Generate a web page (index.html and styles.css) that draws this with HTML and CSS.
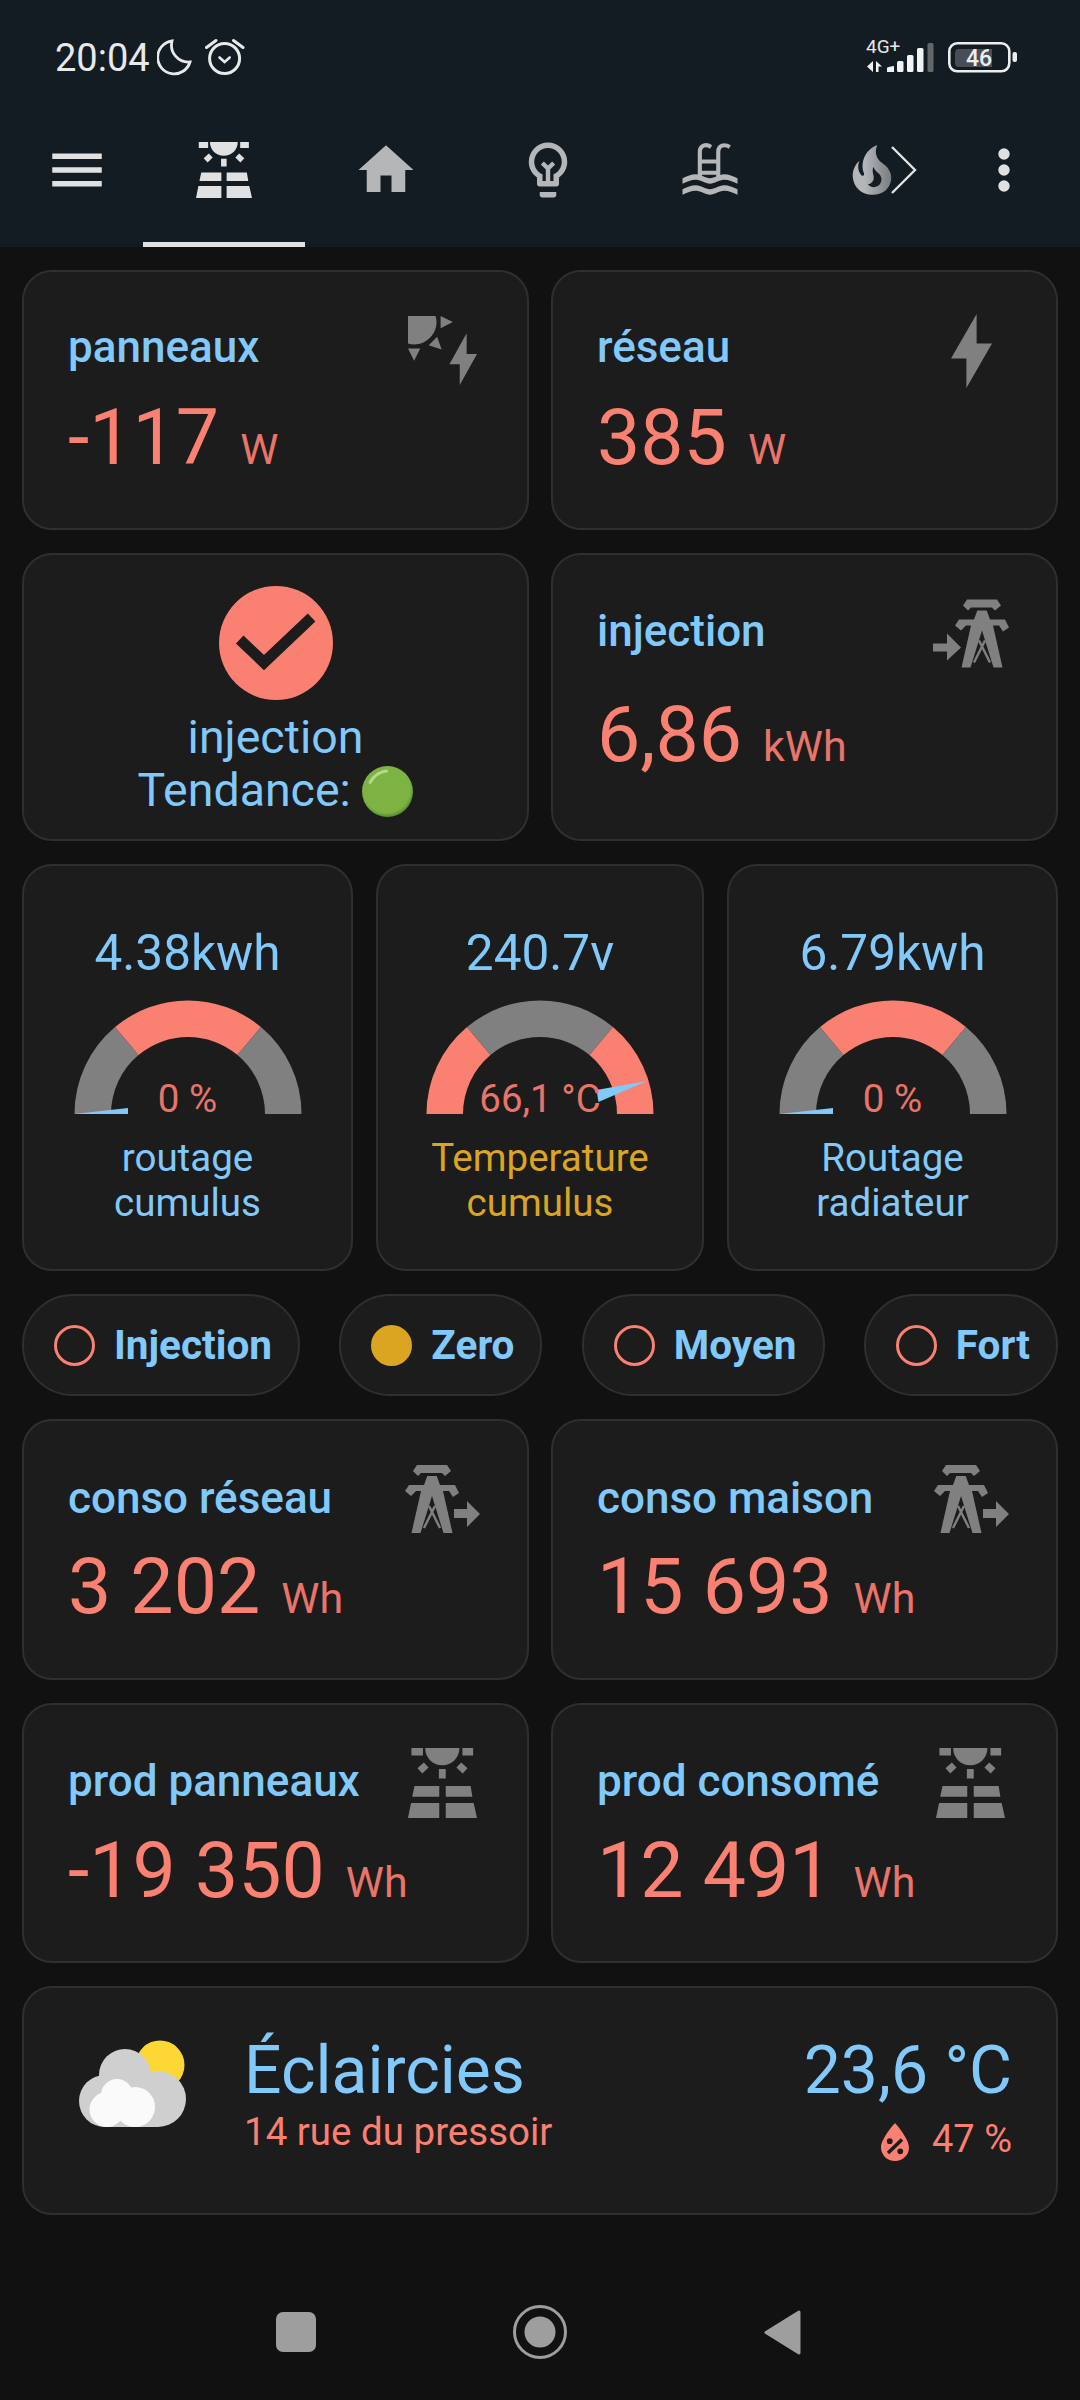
FILE: index.html
```html
<!DOCTYPE html>
<html lang="fr">
<head>
<meta charset="utf-8">
<title>Dashboard</title>
<link rel="stylesheet" href="styles.css">
</head>
<body>
<header class="top">
  <div class="status">
    <span class="time">20:04</span>
    <svg class="moon" viewBox="0 0 35 37"><path d="M15,2 A16.5,16.5 0 1 0 33,23 A17,17 0 0 1 15,2 Z"/></svg>
    <svg class="alarm" viewBox="0 0 40 37"><circle cx="19.6" cy="20.5" r="15"/><path d="M1.5,9.5 L11,2.5 M28.5,2.5 L38,9.5"/><path class="thin" d="M14.5,19.5 L19.6,24 L24.7,19.5"/></svg>
    <span class="spacer"></span>
    <svg class="net" viewBox="0 -6 68 39">
      <text class="net-text" x="0" y="13">4G+</text>
      <path class="net-arrow" d="M1,26.500 L7,21 V32 Z M10,21 L16,26.500 H12.500 V32 H10 Z"/>
      <path class="net-bar" d="M21,32V28Q21,27 28,26V32Z"/>
      <rect class="net-bar" x="31" y="21" width="6.5" height="11" rx="1.5"/>
      <rect class="net-bar" x="41" y="15" width="6.5" height="17" rx="1.5"/>
      <rect class="net-bar" x="51" y="8" width="6.5" height="24" rx="1.5"/>
      <rect class="net-dim" x="61.5" y="3" width="6" height="29" rx="1.5"/>
    </svg>
    <svg class="battery" viewBox="0 0 70 31">
      <rect class="bat-shell" x="1.3" y="1.3" width="60" height="28" rx="8"/>
      <path class="bat-fill" d="M11,7H44V25H11Q7,25 7,21V11Q7,7 11,7Z"/>
      <rect class="bat-tip" x="64.5" y="10" width="4.5" height="10" rx="2"/>
      <text class="bat-text" x="31" y="24" text-anchor="middle">46</text>
    </svg>
  </div>
  <nav class="tabs">
    <div class="tab-menu"><svg class="ic66 on" viewBox="0 0 24 24"><path d="M3,6H21V8H3V6M3,11H21V13H3V11M3,16H21V18H3V16Z"/></svg></div>
    <div class="tab active"><svg class="ic-solar-nav on" viewBox="0 0 55.400 55.700" preserveAspectRatio="none"><path d="M2.750,0H12V6H2.750ZM43.700,0H52.300V6H43.700ZM13.800,0H41.300C41.300,8 35,13.700 27.500,13.700C20,13.700 13.800,8 13.800,0ZM12.700,11.500L16.500,15.500L11.500,20.300L7.600,16.200ZM42.700,11.500L47.800,16.200L43.900,20.300L38.900,15.500ZM24.800,16.700H30.300V24.300H24.800ZM5.200,30.300H25.100V38.700H3.400ZM30.300,30.300H50.300L51.700,38.700H30.300ZM2.400,43.700H25.100V55.700H0ZM30.300,43.700H52.700L55.400,55.700H30.300Z"/></svg></div>
    <div class="tab"><svg class="ic66 off" viewBox="0 0 24 24"><path d="M10,20V14H14V20H19V12H22L12,3L2,12H5V20H10Z"/></svg></div>
    <div class="tab"><svg class="ic66 off" viewBox="0 0 24 24"><path d="M12,2A7,7 0 0,1 19,9C19,11.38 17.81,13.47 16,14.74V17A1,1 0 0,1 15,18H9A1,1 0 0,1 8,17V14.74C6.19,13.47 5,11.38 5,9A7,7 0 0,1 12,2M9,21V20H15V21A1,1 0 0,1 14,22H10A1,1 0 0,1 9,21M12,4A5,5 0 0,0 7,9C7,11.05 8.23,12.81 10,13.58V16H14V13.58C15.77,12.81 17,11.05 17,9A5,5 0 0,0 12,4Z"/><path d="M11.2,16V11.8L9.4,10L10.5,8.9L12,10.4L13.5,8.9L14.6,10L12.8,11.8V16Z"/></svg></div>
    <div class="tab"><svg class="ic66 off" viewBox="0 0 24 24"><path d="M2,15C3.67,14.25 5.33,13.5 7,13.56C8.67,13.62 10.33,15 12,15C13.67,15 15.33,13.62 17,13.56C18.67,13.5 20.33,14.25 22,15V17C20.33,16.25 18.67,15.5 17,15.56C15.33,15.62 13.67,17 12,17C10.33,17 8.67,15.62 7,15.56C5.33,15.5 3.67,16.25 2,17V15M2,19C3.67,18.25 5.33,17.5 7,17.56C8.67,17.62 10.33,19 12,19C13.67,19 15.33,17.62 17,17.56C18.67,17.5 20.33,18.25 22,19V21C20.33,20.25 18.67,19.5 17,19.56C15.33,19.62 13.67,21 12,21C10.33,21 8.67,19.62 7,19.56C5.33,19.5 3.67,20.25 2,21V19Z"/><path class="pool-rail" d="M8.300,14.500V5.300C8.300,3 10.500,2.400 12.400,3.600M15,14.500V5.300C15,3 17.200,2.400 19.200,3.600M8.300,8.900H15M8.300,13H15"/></svg></div>
    <div class="tab">
      <svg class="ic66" viewBox="0 0 24 24"><defs><linearGradient id="flame" x1="0" x2="1" y1="0" y2="0"><stop offset="0.3" stop-color="#b4b6b8"/><stop offset="1" stop-color="#797d80"/></linearGradient></defs><path fill="url(#flame)" d="M17.66 11.2C17.43 10.9 17.15 10.64 16.89 10.38C16.22 9.78 15.46 9.35 14.82 8.72C13.33 7.26 13 4.85 13.95 3C13 3.23 12.17 3.75 11.46 4.32C8.87 6.4 7.85 10.07 9.07 13.22C9.11 13.32 9.15 13.42 9.15 13.55C9.15 13.77 9 13.97 8.8 14.05C8.57 14.15 8.33 14.09 8.14 13.93C8.08 13.88 8.04 13.83 8 13.76C6.87 12.33 6.69 10.28 7.45 8.64C5.78 10 4.87 12.3 5 14.47C5.06 14.97 5.12 15.47 5.29 15.97C5.43 16.57 5.7 17.17 6 17.7C7.08 19.43 8.95 20.67 10.96 20.92C13.1 21.19 15.39 20.8 17.03 19.32C18.86 17.66 19.5 15 18.56 12.72L18.43 12.46C18.22 12 17.66 11.2 17.66 11.2M14.5 17.5C14.22 17.74 13.76 18 13.4 18.1C12.28 18.5 11.16 17.94 10.5 17.28C11.69 17 12.4 16.12 12.61 15.23C12.78 14.43 12.46 13.77 12.33 13C12.21 12.26 12.23 11.63 12.5 10.94C12.69 11.32 12.89 11.7 13.13 12C13.9 13 15.11 13.44 15.37 14.8C15.41 14.94 15.43 15.08 15.43 15.23C15.46 16.05 15.1 16.95 14.5 17.5H14.5Z"/></svg>
      <svg class="chevron" viewBox="0 0 26 48"><path d="M1,1 L24,24 L1,47"/></svg>
    </div>
    <div class="tab-more"><svg class="dots on" viewBox="0 0 12 44"><circle cx="6" cy="6" r="5.7"/><circle cx="6" cy="22" r="5.7"/><circle cx="6" cy="38" r="5.7"/></svg></div>
  </nav>
</header>

<main class="dash">
  <section class="pair">
    <article class="card card-r1">
      <div class="stat">
        <div class="label">panneaux</div>
        <div class="value">-117 <span class="unit">W</span></div>
      </div>
      <svg class="icon icon-sun" viewBox="2 2 20 20"><path d="M11.45,2V5.55L15,3.77L11.45,2M10.45,8L8,10.46L11.75,11.71L10.45,8M2,11.45L3.77,15L5.55,11.45H2M10,2H2V10C2.57,10.17 3.17,10.25 3.77,10.25C7.35,10.26 10.26,7.35 10.27,3.75C10.26,3.16 10.17,2.57 10,2M17,22V16H14L19,7V13H22L17,22Z"/></svg>
    </article>
    <article class="card card-r1">
      <div class="stat">
        <div class="label">réseau</div>
        <div class="value">385 <span class="unit">W</span></div>
      </div>
      <svg class="icon icon-bolt" viewBox="14 7 8 15" preserveAspectRatio="none"><path d="M17,22V16H14L19,7V13H22L17,22Z"/></svg>
    </article>
  </section>

  <section class="pair">
    <article class="card card-trend">
      <svg class="check" viewBox="0 0 114 114"><circle cx="57" cy="57" r="57"/><path d="M20.700,53.600 L45,76.600 L92.600,31.400"/></svg>
      <div class="trend-text">injection<br>Tendance: <svg class="green" viewBox="0 0 50 50"><defs><radialGradient id="gr" cx="0.48" cy="0.45" r="0.55"><stop offset="0.85" stop-color="#7cb342"/><stop offset="1" stop-color="#558b2f"/></radialGradient></defs><circle cx="25" cy="25" r="25" fill="url(#gr)"/><path d="M8,16 Q14,6 24,5" class="shine"/></svg></div>
    </article>
    <article class="card card-r2">
      <div class="stat">
        <div class="label">injection</div>
        <div class="value">6,86 <span class="unit">kWh</span></div>
      </div>
      <svg class="icon icon-import" viewBox="33 19 76 68">
        <path d="M33,63H47V53L61,67L47,80V71H33Z"/>
        <path d="M63,25 67,19H97L101,25 95,30 92,27H71L68,30Z"/>
        <path d="M77.300,30H86.700L90,39H105L109,47 103,51 99,45H93L102.500,87H93.500L82,50 70.500,87H61.500L71,45H66L61,50 55,45 59,39H74Z"/>
        <path class="lattice" d="M79,60 L90,82 M85,60 L74,82"/>
      </svg>
    </article>
  </section>

  <section class="trio">
    <article class="card gauge-card">
      <div class="gauge-top">4.38kwh</div>
      <div class="gauge-wrap">
        <svg class="gauge" viewBox="-114 -114 228 114">
          <path class="g-grey" d="M-113.500,0 A113.500,113.500 0 0 1 -72.960,-86.950 L-49.500,-59 A77,77 0 0 0 -77,0 Z"/>
          <path class="g-red" d="M-72.960,-86.950 A113.500,113.500 0 0 1 72.960,-86.950 L49.500,-59 A77,77 0 0 0 -49.500,-59 Z"/>
          <path class="g-grey" d="M72.960,-86.950 A113.500,113.500 0 0 1 113.500,0 L77,0 A77,77 0 0 0 49.500,-59 Z"/>
          <polygon class="g-needle" points="-113.500,0 -60,-6 -60,0"/>
        </svg>
        <span class="g-text">0 %</span>
      </div>
      <div class="gauge-name">routage<br>cumulus</div>
    </article>
    <article class="card gauge-card">
      <div class="gauge-top">240.7v</div>
      <div class="gauge-wrap">
        <svg class="gauge" viewBox="-114 -114 228 114">
          <path class="g-red" d="M-113.500,0 A113.500,113.500 0 0 1 -72.960,-86.950 L-49.500,-59 A77,77 0 0 0 -77,0 Z"/>
          <path class="g-grey" d="M-72.960,-86.950 A113.500,113.500 0 0 1 72.960,-86.950 L49.500,-59 A77,77 0 0 0 -49.500,-59 Z"/>
          <path class="g-red" d="M72.960,-86.950 A113.500,113.500 0 0 1 113.500,0 L77,0 A77,77 0 0 0 49.500,-59 Z"/>
          <polygon class="g-needle" points="107,-33 56.500,-24 58.500,-12"/>
        </svg>
        <span class="g-text">66,1 °C</span>
      </div>
      <div class="gauge-name gold">Temperature<br>cumulus</div>
    </article>
    <article class="card gauge-card">
      <div class="gauge-top">6.79kwh</div>
      <div class="gauge-wrap">
        <svg class="gauge" viewBox="-114 -114 228 114">
          <path class="g-grey" d="M-113.500,0 A113.500,113.500 0 0 1 -72.960,-86.950 L-49.500,-59 A77,77 0 0 0 -77,0 Z"/>
          <path class="g-red" d="M-72.960,-86.950 A113.500,113.500 0 0 1 72.960,-86.950 L49.500,-59 A77,77 0 0 0 -49.500,-59 Z"/>
          <path class="g-grey" d="M72.960,-86.950 A113.500,113.500 0 0 1 113.500,0 L77,0 A77,77 0 0 0 49.500,-59 Z"/>
          <polygon class="g-needle" points="-113.500,0 -60,-6 -60,0"/>
        </svg>
        <span class="g-text">0 %</span>
      </div>
      <div class="gauge-name">Routage<br>radiateur</div>
    </article>
  </section>

  <section class="chips">
    <div class="chip"><span class="radio"></span>Injection</div>
    <div class="chip"><span class="radio radio-on"></span>Zero</div>
    <div class="chip"><span class="radio"></span>Moyen</div>
    <div class="chip"><span class="radio"></span>Fort</div>
  </section>

  <section class="pair">
    <article class="card card-r4">
      <div class="stat">
        <div class="label">conso réseau</div>
        <div class="value">3 202 <span class="unit">Wh</span></div>
      </div>
      <svg class="icon icon-export" viewBox="55 19 75 68">
        <path d="M104,63H117V55L130,68L117,81V72H104Z"/>
        <path d="M63,25 67,19H97L101,25 95,30 92,27H71L68,30Z"/>
        <path d="M77.300,30H86.700L90,39H105L109,47 103,51 99,45H93L102.500,87H93.500L82,50 70.500,87H61.500L71,45H66L61,50 55,45 59,39H74Z"/>
        <path class="lattice" d="M79,60 L90,82 M85,60 L74,82"/>
      </svg>
    </article>
    <article class="card card-r4">
      <div class="stat">
        <div class="label">conso maison</div>
        <div class="value">15 693 <span class="unit">Wh</span></div>
      </div>
      <svg class="icon icon-export" viewBox="55 19 75 68">
        <path d="M104,63H117V55L130,68L117,81V72H104Z"/>
        <path d="M63,25 67,19H97L101,25 95,30 92,27H71L68,30Z"/>
        <path d="M77.300,30H86.700L90,39H105L109,47 103,51 99,45H93L102.500,87H93.500L82,50 70.500,87H61.500L71,45H66L61,50 55,45 59,39H74Z"/>
        <path class="lattice" d="M79,60 L90,82 M85,60 L74,82"/>
      </svg>
    </article>
  </section>

  <section class="pair">
    <article class="card card-r5">
      <div class="stat">
        <div class="label">prod panneaux</div>
        <div class="value">-19 350 <span class="unit">Wh</span></div>
      </div>
      <svg class="icon icon-solar" viewBox="0 0 55.400 55.700" preserveAspectRatio="none"><path d="M2.750,0H12V6H2.750ZM43.700,0H52.300V6H43.700ZM13.800,0H41.300C41.300,8 35,13.700 27.500,13.700C20,13.700 13.800,8 13.800,0ZM12.700,11.500L16.500,15.500L11.500,20.300L7.600,16.200ZM42.700,11.500L47.800,16.200L43.900,20.300L38.900,15.500ZM24.800,16.700H30.300V24.300H24.800ZM5.200,30.300H25.100V38.700H3.400ZM30.300,30.300H50.300L51.700,38.700H30.300ZM2.400,43.700H25.100V55.700H0ZM30.300,43.700H52.700L55.400,55.700H30.300Z"/></svg>
    </article>
    <article class="card card-r5">
      <div class="stat">
        <div class="label">prod consomé</div>
        <div class="value">12 491 <span class="unit">Wh</span></div>
      </div>
      <svg class="icon icon-solar" viewBox="0 0 55.400 55.700" preserveAspectRatio="none"><path d="M2.750,0H12V6H2.750ZM43.700,0H52.300V6H43.700ZM13.800,0H41.300C41.300,8 35,13.700 27.500,13.700C20,13.700 13.800,8 13.800,0ZM12.700,11.500L16.500,15.500L11.500,20.300L7.600,16.200ZM42.700,11.500L47.800,16.200L43.900,20.300L38.900,15.500ZM24.800,16.700H30.300V24.300H24.800ZM5.200,30.300H25.100V38.700H3.400ZM30.300,30.300H50.300L51.700,38.700H30.300ZM2.400,43.700H25.100V55.700H0ZM30.300,43.700H52.700L55.400,55.700H30.300Z"/></svg>
    </article>
  </section>

  <article class="card weather">
    <svg class="w-icon" viewBox="0 0 108 87">
      <circle class="w-sun" cx="81" cy="25" r="24.500"/>
      <g class="w-grey"><circle cx="46" cy="35" r="26"/><circle cx="79" cy="59" r="28"/><circle cx="26" cy="61" r="26"/><rect x="26" y="55" width="53" height="32"/></g>
      <g class="w-white"><circle cx="38" cy="55" r="16"/><circle cx="56" cy="67" r="20"/><circle cx="28" cy="69.500" r="17.500"/></g>
    </svg>
    <div class="w-main">
      <div class="w-state">Éclaircies</div>
      <div class="w-place">14 rue du pressoir</div>
    </div>
    <div class="w-side">
      <div class="w-temp">23,6 °C</div>
      <div class="w-hum"><svg class="drop" viewBox="6 3.250 12 16.750" preserveAspectRatio="none"><path fill-rule="evenodd" d="M12,3.25C12,3.25 6,10 6,14C6,17.32 8.69,20 12,20A6,6 0 0,0 18,14C18,10 12,3.25 12,3.25M14.47,9.97L15.53,11.03L9.53,17.03L8.47,15.97L14.47,9.97M9.75,10A1.25,1.25 0 0,1 11,11.25A1.25,1.25 0 0,1 9.75,12.5A1.25,1.25 0 0,1 8.5,11.25A1.25,1.25 0 0,1 9.75,10M14.25,14.5A1.25,1.25 0 0,1 15.5,15.75A1.25,1.25 0 0,1 14.25,17A1.25,1.25 0 0,1 13,15.75A1.25,1.25 0 0,1 14.25,14.5Z"/></svg><span>47 %</span></div>
    </div>
  </article>
</main>

<footer class="sysnav">
  <span class="nav-square"></span>
  <svg class="nav-circle" viewBox="0 0 54 54"><circle class="ring" cx="27" cy="27" r="25.500"/><circle class="dot" cx="27" cy="27" r="15.500"/></svg>
  <svg class="nav-back" viewBox="0 0 37 45"><path d="M35,2 L2,22.500 L35,43 Z"/></svg>
</footer>
</body>
</html>
```
FILE: styles.css
```css
* { box-sizing: border-box; }
html, body { margin: 0; padding: 0; }
body {
  width: 1080px;
  height: 2400px;
  overflow: hidden;
  background: #111111;
  font-family: Roboto, "Liberation Sans", sans-serif;
  color: #81c9fa;
}

/* header */
.top { height: 247px; background: #141c23; }
.status { height: 100px; display: flex; align-items: flex-start; padding: 0 62px 0 55px; }
.time { font-size: 38px; line-height: 44px; margin-top: 36px; color: #e8eaea; width: 102px; }
.moon { width: 35px; height: 37px; margin-top: 39px; fill: none; stroke: #e8eaea; stroke-width: 2.8; }
.alarm { width: 40px; height: 37px; margin-top: 38px; margin-left: 13px; fill: none; stroke: #e8eaea; stroke-width: 3; stroke-linecap: round; }
.alarm .thin { stroke-width: 2.6; }
.spacer { flex: 1; }
.net { width: 68px; height: 39px; margin-top: 34px; }
.net-text { font-size: 19px; fill: #e6e8e8; }
.net-arrow, .net-bar { fill: #f2f3f3; }
.net-dim { fill: #62676a; }
.battery { width: 70px; height: 31px; margin-top: 42px; margin-left: 14px; }
.bat-shell { fill: none; stroke: #eceeee; stroke-width: 2.6; }
.bat-fill { fill: #494e56; }
.bat-tip { fill: #eceeee; }
.bat-text { font-size: 23px; font-weight: 500; fill: #eceeee; }

.tabs { height: 147px; display: flex; }
.tab-menu { width: 143px; padding-left: 11px; display: flex; align-items: center; justify-content: center; padding-bottom: 7px; }
.tab { position: relative; width: 162px; display: flex; align-items: center; justify-content: center; padding-bottom: 7px; }
.tab.active { border-bottom: 5px solid #e1e1e1; padding-bottom: 2px; }
.tab-more { flex: 1; display: flex; align-items: center; justify-content: center; padding-right: 26px; padding-bottom: 7px; }
.ic66 { width: 66px; height: 66px; }
.ic-solar-nav { width: 56px; height: 56px; }
.dots { width: 12px; height: 44px; }
.on { fill: #e1e1e1; }
.off { fill: #b4b6b8; }
.pool-rail { fill: none; stroke: #b4b6b8; stroke-width: 1.5; }
.chevron { position: absolute; left: 100px; top: 46px; width: 26px; height: 48px; fill: none; stroke: #e1e1e1; stroke-width: 2.4; }

/* layout */
.dash { padding: 23px 22px 0; display: flex; flex-direction: column; gap: 23px; }
.pair { display: grid; grid-template-columns: 507px 507px; gap: 22px; }
.trio { display: grid; grid-template-columns: 331px 328px 331px; gap: 23px; }
.card {
  background: #1c1c1c;
  border: 2px solid #2f2f2f;
  border-radius: 30px;
}

/* stat cards */
.card-r1, .card-r2, .card-r4, .card-r5 { display: flex; justify-content: space-between; align-items: flex-start; padding-left: 44px; }
.card-r1 { height: 260px; padding-top: 51px; }
.card-r2 { height: 288px; padding-top: 52px; }
.card-r4 { height: 261px; padding-top: 53px; }
.card-r5 { height: 260px; padding-top: 52px; }
.label { font-size: 44px; line-height: 48px; font-weight: 500; white-space: nowrap; }
.value { font-size: 77px; line-height: 90px; color: #fa8072; white-space: nowrap; margin-top: 22px; }
.card-r2 .value { margin-top: 35px; }
.card-r4 .value { margin-top: 20px; }
.card-r5 .value { margin-top: 21px; }
.unit { font-size: 43px; color: #e8746a; margin-left: 2px; }

.icon { fill: #808080; flex: none; }
.icon-sun { width: 69px; height: 69px; margin-top: -7px; margin-right: 50px; }
.icon-bolt { width: 41px; height: 74px; margin-top: -9px; margin-right: 64px; }
.icon-import { width: 76px; height: 69px; margin-top: -8px; margin-right: 47px; }
.icon-export { width: 75px; height: 70px; margin-top: -10px; margin-right: 47px; }
.icon-solar { width: 69px; height: 70px; margin-top: -9px; margin-right: 51px; }
.lattice { fill: none; stroke: #808080; stroke-width: 2.4; }

/* trend */
.card-trend { height: 288px; display: flex; flex-direction: column; align-items: center; padding-top: 31px; }
.check { width: 114px; height: 114px; flex: none; }
.check circle { fill: #fa8072; }
.check path { fill: none; stroke: #1c1c1c; stroke-width: 11; }
.trend-text { font-size: 46.5px; line-height: 53px; text-align: center; margin-top: 11px; white-space: nowrap; }
.green { width: 51px; height: 51px; vertical-align: -11px; }
.shine { fill: none; stroke: #b6d98e; stroke-width: 3; stroke-linecap: round; }

/* gauges */
.gauge-card { height: 407px; display: flex; flex-direction: column; align-items: center; padding-top: 58px; }
.gauge-top { font-size: 49.5px; line-height: 58px; }
.gauge-wrap { position: relative; width: 228px; height: 114px; margin-top: 18px; flex: none; }
.gauge { display: block; width: 228px; height: 114px; }
.g-grey { fill: #808080; }
.g-red { fill: #fa8072; }
.g-needle { fill: #81c9fa; }
.g-text { position: absolute; left: 0; right: 0; bottom: -5px; text-align: center; font-size: 38.5px; line-height: 40px; color: #e8746a; }
.gauge-name { font-size: 38.5px; line-height: 45px; text-align: center; margin-top: 21px; }
.gold { color: #daa520; }

/* chips */
.chips { display: flex; justify-content: space-between; height: 102px; }
.chip {
  display: flex;
  align-items: center;
  gap: 19px;
  padding: 0 26px 0 30px;
  background: #1c1c1c;
  border: 2px solid #2f2f2f;
  border-radius: 51px;
  font-size: 40.5px;
  font-weight: 700;
  white-space: nowrap;
}
.radio { width: 41px; height: 41px; border-radius: 50%; border: 3.5px solid #fa8072; flex: none; }
.radio-on { background: #daa520; border-color: #daa520; }

/* weather */
.weather { height: 229px; display: flex; align-items: flex-start; padding: 45px 44px 0 55px; }
.w-icon { width: 108px; height: 87px; margin-top: 7px; flex: none; }
.w-sun { fill: #fdd835; }
.w-grey { fill: #cfcfcf; }
.w-white { fill: #fafafa; }
.w-main { margin-left: 57px; flex: 1; }
.w-state { font-size: 66px; line-height: 76px; }
.w-place { font-size: 38.5px; line-height: 44px; color: #fa8072; margin-top: 1px; }
.w-side { text-align: right; }
.w-temp { font-size: 66px; line-height: 76px; }
.w-hum { display: flex; justify-content: flex-end; align-items: center; gap: 23px; font-size: 38px; line-height: 44px; color: #fa8072; margin-top: 8px; }
.drop { width: 28px; height: 38px; fill: #fa8072; margin-top: 6px; }

/* system nav */
.sysnav { display: flex; align-items: center; justify-content: center; gap: 197px; padding: 90px 4px 0 0; }
.nav-square { width: 40px; height: 40px; background: #9e9e9e; border-radius: 7px; }
.nav-circle { width: 54px; height: 54px; }
.ring { fill: none; stroke: #9e9e9e; stroke-width: 3; }
.dot { fill: #9e9e9e; }
.nav-back { width: 37px; height: 45px; fill: #9e9e9e; stroke: #9e9e9e; stroke-width: 3; stroke-linejoin: round; }
```
